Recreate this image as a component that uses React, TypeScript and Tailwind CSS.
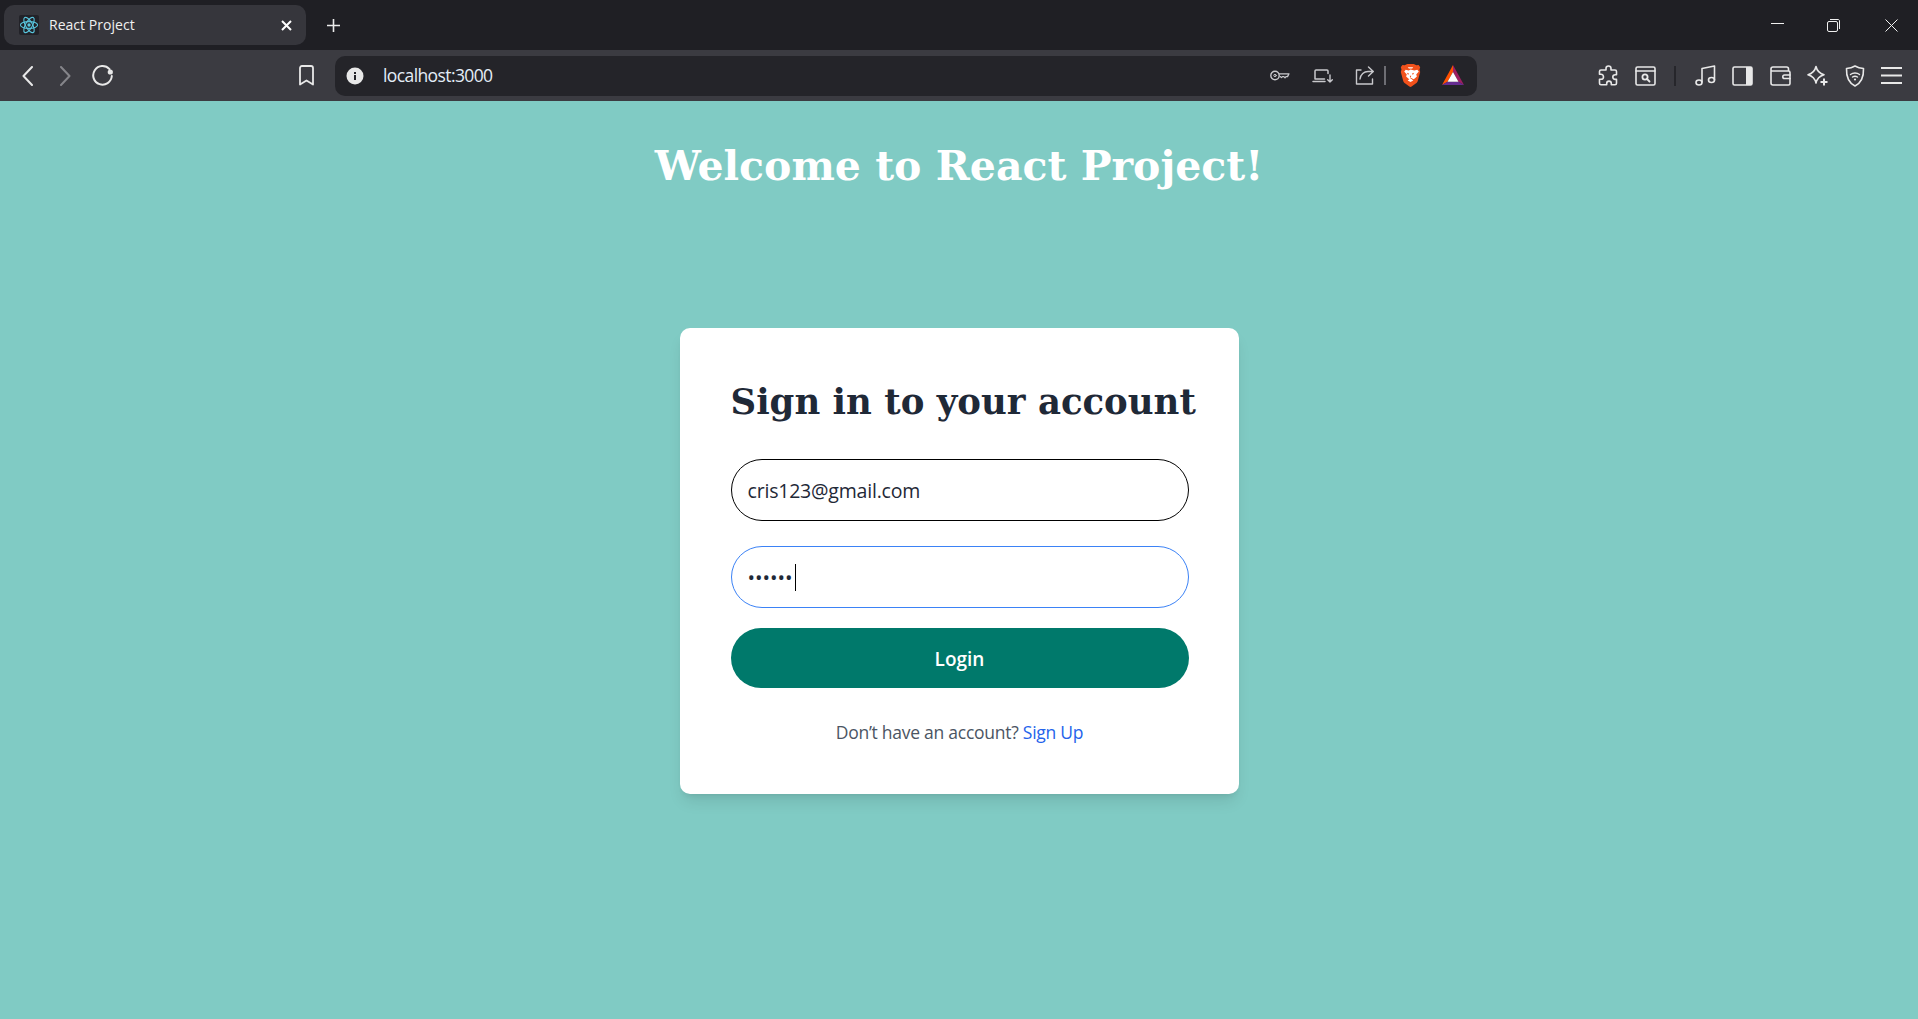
import React from 'react'

const stroke = { fill: 'none', stroke: 'currentColor', strokeWidth: 1.6, strokeLinecap: 'round', strokeLinejoin: 'round' } as const

const ReactIcon = () => (
    <svg width="20" height="20" viewBox="0 0 20 20" className="bg-[#222228] rounded-[2px] shrink-0">
        <g fill="none" stroke="#58c4dc" strokeWidth="1.1">
            <ellipse cx="10" cy="10" rx="8.6" ry="3.4" />
            <ellipse cx="10" cy="10" rx="8.6" ry="3.4" transform="rotate(60 10 10)" />
            <ellipse cx="10" cy="10" rx="8.6" ry="3.4" transform="rotate(120 10 10)" />
        </g>
        <circle cx="10" cy="10" r="1.7" fill="#58c4dc" />
    </svg>
)

const BraveIcon = () => (
    <svg width="21" height="23" viewBox="0 0 21 23" className="shrink-0">
        <path d="M4.6 1.2 7.3 0h6.400l2.700 1.200 2.200-.1 1.600 2.100-.7 2.200.7 2.500-2.300 8.600c-.4 1.400-1 2.200-2.200 3L11.600 22.500c-.7.500-1.500.500-2.200 0l-4.100-2.900c-1.200-.8-1.800-1.600-2.200-3L.8 8l.7-2.500L.8 3.300 2.400 1.100z" fill="#f1511b" />
        <path d="M10.500 5.500 8.800 6.600 5.700 5.800 4.200 7.400l2.600 3-.7 2.200 2.500 2.200 1 .5 1.900-1.400 1.900 1.400 1-.5 2.500-2.200-.7-2.200 2.600-3-1.500-1.600-3.100.8z" fill="#fff" />
        <path d="M7.700 16.500l2.800 1.400 2.800-1.400-1.800-1.400h-2zM7.800 3.200h5.400l-1 1.200H8.800z" fill="#fff" />
        <path d="M6.900 8.800l2.100.8-.9 1.300zM14.100 8.800l-2.100.8.900 1.300zM9.700 11.800h1.600l-.8 2.400z" fill="#f1511b" />
    </svg>
)

const BatIcon = () => (
    <svg width="22" height="20" viewBox="0 0 22 20" className="shrink-0">
        <path d="M11 0 0 20l5.500-3.300L11 7z" fill="#ff5000" />
        <path d="M11 0v7l5.500 9.700L22 20z" fill="#9e1f63" />
        <path d="M0 20h22l-5.500-3.300h-11z" fill="#662d91" />
        <path d="M11 7l5.500 9.700h-11z" fill="#fff" />
    </svg>
)

const Divider = ({ className }: { className: string }) => <div className={`w-[2px] h-5 shrink-0 ${className}`}></div>

const App: React.FC = () => {
    return (
        <div className="w-[1918px] h-[1019px] overflow-hidden flex flex-col bg-[#80cbc4] font-['Open_Sans',sans-serif]">
            {/* tab strip */}
            <div className="h-[50px] bg-[#1f1f24] flex items-center shrink-0 text-white">
                <div className="ml-1 w-[302px] h-10 rounded-[10px] bg-[#36363c] flex items-center pl-[15px] pr-[14px]">
                    <ReactIcon />
                    <span className="ml-[10px] -mt-[2px] flex-1 text-[14px] text-[#f0f0f0] font-['Open_Sans',sans-serif] tracking-[0.03px]">React Project</span>
                    <svg width="11" height="11" viewBox="0 0 11 11" className="text-white"><path d="M1 1l9 9M10 1l-9 9" fill="none" stroke="currentColor" strokeWidth="2" /></svg>
                </div>
                <svg width="13" height="13" viewBox="0 0 13 13" className="ml-[21px] text-[#ececec]"><path d="M6.500 0v13M0 6.500h13" fill="none" stroke="currentColor" strokeWidth="1.6" /></svg>
                <div className="flex-1"></div>
                <svg width="13" height="13" viewBox="0 0 13 13" className="text-[#f0f0f0]"><path d="M0 4.500h13" fill="none" stroke="currentColor" strokeWidth="1" /></svg>
                <svg width="13" height="13" viewBox="0 0 13 13" className="ml-[43px] text-[#f0f0f0]">
                    <rect x=".5" y="2.500" width="10" height="10" rx="1.500" fill="none" stroke="currentColor" />
                    <path d="M3 .5h8c.9 0 1.500.6 1.500 1.500v8" fill="none" stroke="currentColor" />
                </svg>
                <svg width="13" height="13" viewBox="0 0 13 13" className="ml-[45px] mr-5 text-[#f0f0f0]"><path d="M.5.5l12 12M12.500.5l-12 12" fill="none" stroke="currentColor" /></svg>
            </div>

            {/* toolbar */}
            <div className="h-[51px] bg-[#3b3b41] flex items-center shrink-0 text-[#e8e8e8]">
                <svg width="11" height="20" viewBox="0 0 11 20" className="ml-[22px]"><path d="M10 1 1.500 10 10 19" {...stroke} strokeWidth="2" /></svg>
                <svg width="11" height="20" viewBox="0 0 11 20" className="ml-[27px] text-[#85858a]"><path d="M1 1l8.500 9L1 19" {...stroke} strokeWidth="2" /></svg>
                <svg width="21" height="21" viewBox="0 0 21 21" className="ml-[21px]">
                    <path d="M17.500 4.200A9.300 9.300 0 1 0 19.800 11" {...stroke} strokeWidth="2" />
                    <circle cx="18.300" cy="7" r="2.600" fill="currentColor" />
                </svg>
                <svg width="15" height="21" viewBox="0 0 15 21" className="ml-[186px]"><path d="M1 3c0-1.200.8-2 2-2h9c1.200 0 2 .8 2 2v16.500l-6.500-4-6.500 4z" {...stroke} strokeWidth="1.800" /></svg>

                {/* address bar */}
                <div className="ml-[21px] w-[1142px] h-10 rounded-[10px] bg-[#242429] flex items-center shrink-0">
                    <svg width="18" height="18" viewBox="0 0 18 18" className="ml-[11px] shrink-0">
                        <circle cx="9" cy="9" r="8.500" fill="#e8e8e8" />
                        <rect x="8" y="8" width="2" height="5" fill="#242429" />
                        <rect x="8" y="5" width="2" height="2" fill="#242429" />
                    </svg>
                    <span className="ml-[19px] -mt-px flex-1 text-[17.5px] text-[#e3edf7] tracking-[-0.6px]">localhost:3000</span>
                    <svg width="20" height="11" viewBox="0 0 20 11" className="shrink-0 text-[#c8c8cc]">
                        <circle cx="5" cy="5.500" r="4.200" {...stroke} strokeWidth="1.400" />
                        <circle cx="5" cy="5.500" r="1.200" {...stroke} strokeWidth="1" />
                        <path d="M9.200 3.800H19l-1.500 2.800h-1.500l-1 1.200-1.200-1.200h-1.300l-1 1-1.300-1" {...stroke} strokeWidth="1.300" />
                    </svg>
                    <svg width="21" height="14" viewBox="0 0 21 14" className="ml-[22px] shrink-0 text-[#c8c8cc]">
                        <path d="M12.500 10H3V2c0-.6.400-1 1-1h11c.6 0 1 .4 1 1v2.500M1 12.500h12" {...stroke} strokeWidth="1.500" />
                        <path d="M18 6v7M15.700 10.800l2.300 2.300 2.300-2.300" {...stroke} strokeWidth="1.400" />
                    </svg>
                    <svg width="19" height="19" viewBox="0 0 19 19" className="ml-[22px] shrink-0 text-[#c8c8cc]">
                        <path d="M6 4H1.500v14h16v-5" {...stroke} strokeWidth="1.400" />
                        <path d="M5 13c.6-4.500 4-7.500 8-7.500H18M13.500 1l4.800 4.500-4.800 4.500" {...stroke} strokeWidth="1.400" />
                    </svg>
                    <Divider className="ml-[10px] bg-[#6e6e74] h-[19px] w-[1px]" />
                    <div className="ml-[14px] shrink-0 flex"><BraveIcon /></div>
                    <div className="ml-[21px] -mt-[2px] shrink-0 flex"><BatIcon /></div>
                    <div className="w-[13px] shrink-0"></div>
                </div>

                {/* extensions and menu */}
                <svg width="21" height="21" viewBox="0 0 21 21" className="ml-[121px] shrink-0">
                    <path d="M8 3.500C8 1.900 9.200 1 10.500 1S13 1.900 13 3.500V5h4c.9 0 1.500.6 1.500 1.500v3.300h-1.200c-1.500 0-2.500 1-2.500 2.300s1 2.300 2.500 2.300h1.200v3.900c0 .9-.6 1.500-1.500 1.500h-3.700v-1.200c0-1.500-1-2.500-2.300-2.500s-2.300 1-2.300 2.500v1.200H3c-.9 0-1.500-.6-1.500-1.500v-4H3c1.500 0 2.500-1 2.500-2.300S4.500 9.200 3 9.200H1.500V6.500C1.500 5.600 2.100 5 3 5h5z" {...stroke} />
                </svg>
                <svg width="21" height="20" viewBox="0 0 21 20" className="ml-4 shrink-0">
                    <rect x="1" y="1" width="19" height="18" rx="1.500" {...stroke} />
                    <path d="M1 5h19" {...stroke} />
                    <circle cx="10" cy="11" r="2.600" {...stroke} strokeWidth="1.800" />
                    <path d="M12 13l2.500 2.500" {...stroke} strokeWidth="1.800" />
                </svg>
                <Divider className="ml-[18px] bg-[#26262b]" />
                <svg width="21" height="21" viewBox="0 0 21 21" className="ml-[19px] shrink-0">
                    <ellipse cx="4" cy="17.500" rx="3" ry="2.500" {...stroke} />
                    <ellipse cx="16.500" cy="15" rx="3" ry="2.500" {...stroke} />
                    <path d="M7 17V3.500L19.500 1v14" {...stroke} />
                </svg>
                <svg width="21" height="20" viewBox="0 0 21 20" className="ml-4 shrink-0">
                    <rect x="1" y="1" width="19" height="18" rx="1.500" {...stroke} />
                    <rect x="14" y="1" width="6" height="18" fill="currentColor" />
                </svg>
                <svg width="21" height="20" viewBox="0 0 21 20" className="ml-[17px] shrink-0">
                    <path d="M18.500 5V3c0-1.200-.8-2-2-2H3C1.800 1 1 1.800 1 3v14c0 1.200.8 2 2 2h15.500c.9 0 1.500-.6 1.500-1.500v-11c0-.9-.6-1.500-1.500-1.500H2" {...stroke} />
                    <path d="M20 9h-5.500c-1 0-1.700.7-1.700 1.700s.7 1.800 1.700 1.800H20" {...stroke} />
                </svg>
                <svg width="22" height="21" viewBox="0 0 22 21" className="ml-[15px] shrink-0">
                    <path d="M10 1.500c1 4.500 3 6.700 8 8.200-5 1.500-7 3.700-8 8.300-1-4.600-3-6.800-8-8.300 5-1.500 7-3.700 8-8.200z" {...stroke} />
                    <path d="M18 13.500v7M14.500 17h7" stroke="currentColor" strokeWidth="2" />
                </svg>
                <svg width="20" height="22" viewBox="0 0 20 22" className="ml-[17px] shrink-0">
                    <path d="M10 1c2.500 1.500 5 2.300 8.500 2.500.3 8-1.500 14-8.500 17.500C3 17.500 1.200 11.500 1.500 3.500 5 3.300 7.500 2.500 10 1z" {...stroke} />
                    <path d="M5.500 9.500c2.500-2 6.500-2 9 0M7.500 12c1.500-1 3.500-1 5 0" {...stroke} strokeWidth="1.400" />
                    <circle cx="10" cy="14.500" r="1.100" fill="currentColor" />
                </svg>
                <svg width="21" height="17" viewBox="0 0 21 17" className="ml-4 shrink-0"><path d="M0 1h21M0 8.500h21M0 16h21" fill="none" stroke="currentColor" strokeWidth="1.800" /></svg>
            </div>

            {/* page */}
            <div className="flex-1 flex flex-col items-center">
                <h1 className="mt-[35px] h-[60px] text-[41px] leading-[60px] font-bold text-white whitespace-nowrap font-['DejaVu_Serif',serif]">Welcome to React Project!</h1>

                <div className="mt-[132px] w-[559px] h-[466px] bg-white rounded-[10px] shadow-lg pt-[42px] pl-[51px]">
                    <h2 className="h-[64px] text-[35.5px] leading-[64px] font-bold whitespace-nowrap text-[#1f2937] font-['DejaVu_Serif',serif]">Sign in to your account</h2>

                    <form className="w-[458px] mt-[25px] flex flex-col">
                        <input
                            type="email"
                            value="cris123@gmail.com"
                            readOnly
                            className="w-full h-[62px] rounded-full border border-black pl-4 text-[19.5px] tracking-[-0.2px] text-[#1f2937] outline-none" />
                        <div className="relative mt-[25px]">
                            <input
                                type="password"
                                value="123456"
                                readOnly
                                className="w-full h-[62px] rounded-full border border-[#3b82f6] pl-4 text-[20px] text-[#1f2937] outline-none" />
                            <span className="absolute left-[64px] top-[18px] w-px h-[27px] bg-black"></span>
                        </div>
                        <button type="button" className="w-full h-[60px] mt-5 pt-[2px] rounded-full bg-[#00796b] text-white text-[19px] font-semibold">Login</button>
                        <p className="mt-[30px] text-center text-[17.5px] tracking-[-0.26px] leading-7 text-[#4b5563]">
                            Don’t have an account? <a className="text-[#2563eb]">Sign Up</a>
                        </p>
                    </form>
                </div>
            </div>
        </div>
    )
}

export default App
